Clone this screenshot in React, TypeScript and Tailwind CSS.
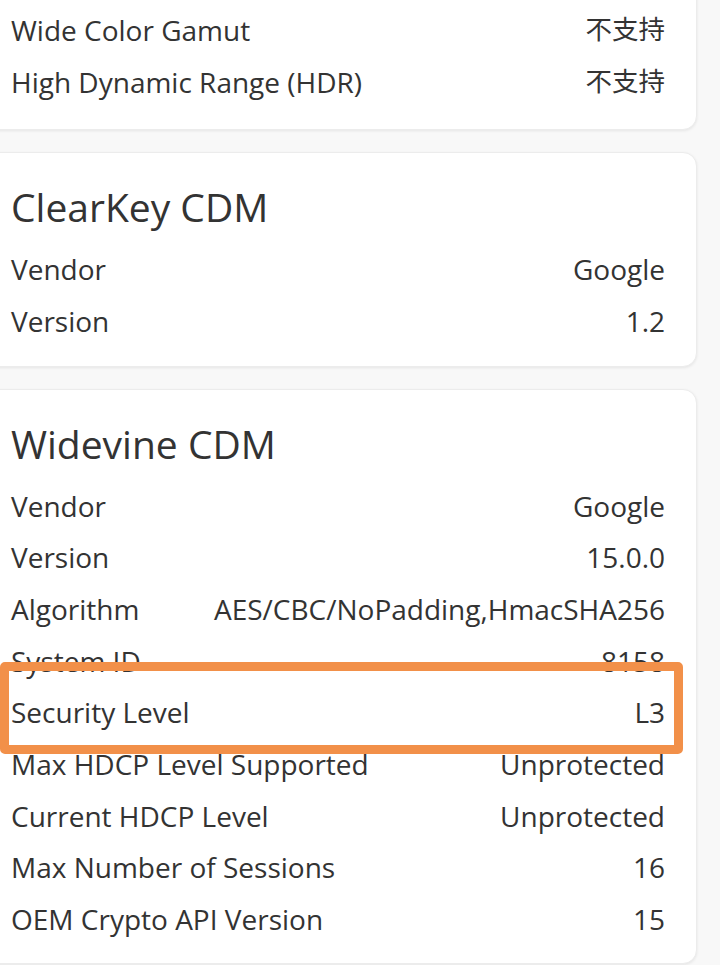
const font = "font-[family-name:'Open_Sans','Noto_Sans_CJK_SC',sans-serif]";

type Row = { label: string; value: string; mark?: boolean; cjk?: boolean };

const Card = ({
  title,
  rows,
  className = "",
}: {
  title?: string;
  rows: Row[];
  className?: string;
}) => {
  return (
    <div
      className={`relative ml-[-22px] w-[719px] rounded-[14px] bg-white border border-[#ececec] shadow-[0_1px_3px_rgba(0,0,0,0.08)] pl-[32px] pr-[31px] ${className}`}
    >
      {title && (
        <h2 className="text-[39px] leading-[50px] text-[#333333] mb-[11px]">
          {title}
        </h2>
      )}
      <ul className="flex flex-col">
        {rows.map((r) => (
          <li
            key={r.label}
            className="relative flex items-center justify-between h-[51.7px] text-[28px] text-[#333333]"
          >
            <span>{r.label}</span>
            <span className={r.cjk ? "text-[26.5px]" : ""}>{r.value}</span>
            {/* highlight box drawn on top of the row */}
            {r.mark && (
              <div className="absolute left-[-11px] right-[-18px] top-[-25px] bottom-[-16px] border-[9px] border-[#f29049] rounded-[5px]" />
            )}
          </li>
        ))}
      </ul>
    </div>
  );
};

export default function App() {
  return (
    <div className={`${font} bg-[#f8f8f8] h-[965px] w-[720px] overflow-hidden`}>
      <div className="flex flex-col gap-[23px]">
        <Card
          className="mt-[-29px] pt-[32px] pb-[22px]"
          rows={[
            { label: "Wide Color Gamut", value: "不支持", cjk: true },
            { label: "High Dynamic Range (HDR)", value: "不支持", cjk: true },
          ]}
        />
        <Card
          className="mt-[-1px] pt-[29px] pb-[19px]"
          title="ClearKey CDM"
          rows={[
            { label: "Vendor", value: "Google" },
            { label: "Version", value: "1.2" },
          ]}
        />
        <Card
          className="mt-[-1px] pt-[29px] pb-[18px]"
          title="Widevine CDM"
          rows={[
            { label: "Vendor", value: "Google" },
            { label: "Version", value: "15.0.0" },
            { label: "Algorithm", value: "AES/CBC/NoPadding,HmacSHA256" },
            { label: "System ID", value: "8158" },
            { label: "Security Level", value: "L3", mark: true },
            { label: "Max HDCP Level Supported", value: "Unprotected" },
            { label: "Current HDCP Level", value: "Unprotected" },
            { label: "Max Number of Sessions", value: "16" },
            { label: "OEM Crypto API Version", value: "15" },
          ]}
        />
      </div>
    </div>
  );
}
